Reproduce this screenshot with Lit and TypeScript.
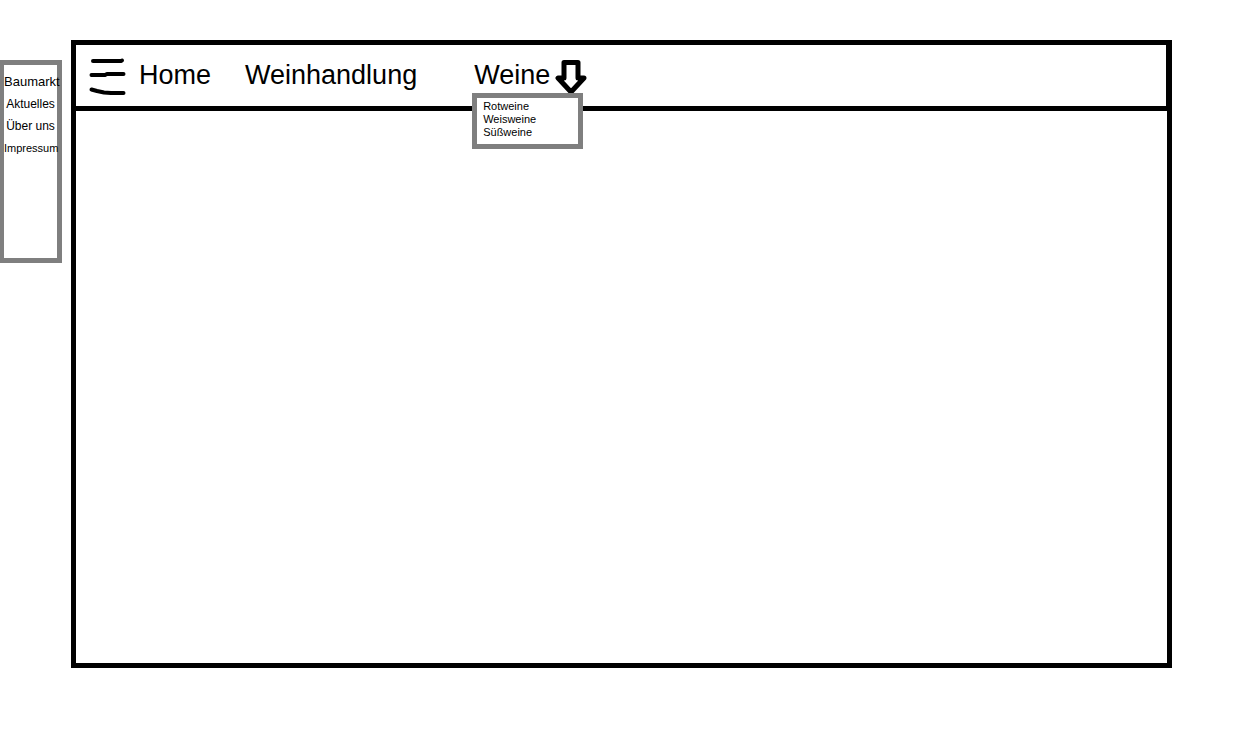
import { LitElement, html, css } from "lit";
import { customElement, state } from "lit/decorators.js";

@customElement("app-root")
export class AppRoot extends LitElement {
  @state() private sideOpen = true;
  @state() private wineOpen = true;

  static styles = css`
    :host {
      display: grid;
      grid-template-columns: 62px 1fr;
      column-gap: 9px;
      box-sizing: border-box;
      min-height: 100vh;
      padding: 40px 78px 71px 0;
      background: #fff;
      color: #000;
      font-family: "Liberation Sans", Arial, sans-serif;
    }
    a {
      color: inherit;
      text-decoration: none;
    }
    button {
      display: flex;
      align-items: center;
      padding: 0;
      border: 0;
      background: none;
      color: inherit;
      font: inherit;
      cursor: pointer;
    }
    ul {
      margin: 0;
      padding: 0;
      list-style: none;
    }
    [hidden] {
      display: none;
    }
    .side {
      box-sizing: border-box;
      min-height: 203px;
      margin-top: 20px;
      align-self: start;
      padding-top: 6px;
      border: 5px solid #7f7f7f;
      border-left-width: 4px;
      font-size: 12px;
      line-height: 22px;
      text-align: center;
      white-space: nowrap;
    }
    .large {
      font-size: 13px;
    }
    .small {
      font-size: 11px;
    }
    .frame {
      grid-column: 2;
      display: flex;
      flex-direction: column;
      border: 5px solid #000;
    }
    .bar {
      display: flex;
      min-height: 61px;
      padding-left: 13px;
      border-bottom: 5px solid #000;
      border-right: 1px solid #000;
      font-size: 27px;
      line-height: 30px;
    }
    .nav {
      display: flex;
      margin-left: 13px;
    }
    .item {
      position: relative;
      display: flex;
      align-items: center;
      padding-bottom: 2px;
      margin-right: 34px;
    }
    .wide {
      margin-right: 57px;
    }
    .arrow {
      margin-left: 5px;
    }
    .menu {
      position: absolute;
      top: 48px;
      left: -2px;
      box-sizing: border-box;
      width: 111px;
      padding: 2px 6px 5px;
      border: 5px solid #7f7f7f;
      background: #fff;
      font-size: 11px;
      line-height: 13px;
    }
    svg {
      display: block;
      fill: none;
      stroke: #000;
    }
    .content {
      flex: 1;
    }
  `;

  render() {
    return html`
      <aside class="side" ?hidden=${!this.sideOpen}>
        <ul>
          <li class="large"><a href="#baumarkt">Baumarkt</a></li>
          <li><a href="#aktuelles">Aktuelles</a></li>
          <li><a href="#ueber-uns">Über uns</a></li>
          <li class="small"><a href="#impressum">Impressum</a></li>
        </ul>
      </aside>
      <div class="frame">
        <header class="bar">
          <button
            aria-label="Menü"
            aria-expanded=${this.sideOpen}
            @click=${() => (this.sideOpen = !this.sideOpen)}
          >
            <svg width="37" height="41" viewBox="0 -3 37 41" stroke-width="4" stroke-linecap="round" stroke-linejoin="round">
              <path d="M4 3H32L33 2.5M2.5 17H16L18 16H34.5M2.5 31.5L8 33L15 34.5L22 35H34.5" />
            </svg>
          </button>
          <nav class="nav">
            <div class="item"><a href="#home">Home</a></div>
            <div class="item wide"><a href="#weinhandlung">Weinhandlung</a></div>
            <div class="item">
              <button
                aria-expanded=${this.wineOpen}
                @click=${() => (this.wineOpen = !this.wineOpen)}
              >
                Weine
                <svg class="arrow" width="33" height="40" viewBox="0 -5 33 40" stroke-width="5" stroke-linejoin="round">
                  <path d="M9 2.5H23V18H29L16 32L3 18H9Z" />
                </svg>
              </button>
              <ul class="menu" ?hidden=${!this.wineOpen}>
                <li><a href="#rotweine">Rotweine</a></li>
                <li><a href="#weisweine">Weisweine</a></li>
                <li><a href="#suessweine">Süßweine</a></li>
              </ul>
            </div>
          </nav>
        </header>
        <main class="content"></main>
      </div>
    `;
  }
}
